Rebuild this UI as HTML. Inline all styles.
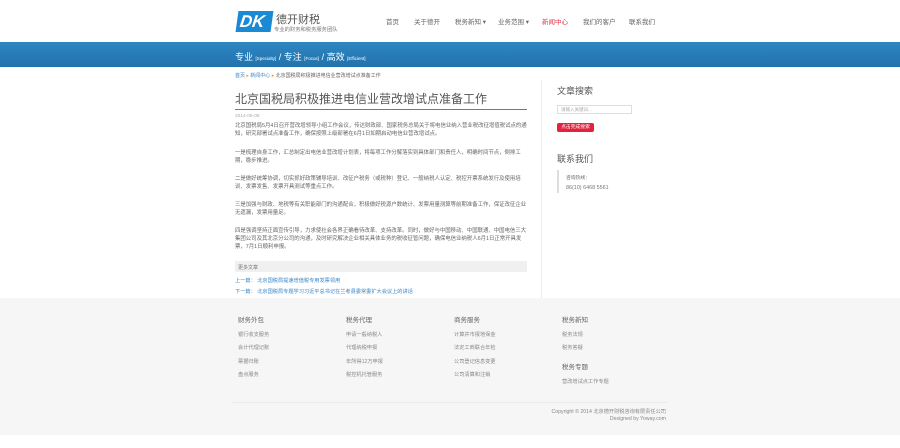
<!DOCTYPE html>
<html><head><meta charset="utf-8"><style>
*{margin:0;padding:0;box-sizing:border-box}
body{width:900px;height:448px;background:#fff;font-family:"Liberation Sans","Noto Sans CJK SC",sans-serif;position:relative;overflow:hidden;color:#555}
.a{position:absolute;white-space:nowrap}
.nav{top:16px;font-size:6.5px;color:#666}
.p{position:absolute;left:235px;width:292px;font-size:5.4px;line-height:8px;color:#666}
.fh{font-size:6.5px;color:#666}
.fi{font-size:5.2px;color:#888}
</style></head><body>
<div class="a" style="left:237px;top:11px;width:35px;height:21px;background:#1a8ad4;color:#fff;font:italic bold 17px 'Liberation Sans',sans-serif;line-height:21px;padding-left:3px;transform:skewX(-8deg)">DK</div>
<div class="a" style="left:276px;top:11px;font-size:11px;color:#555">德开财税</div>
<div class="a" style="left:274px;top:25px;font-size:5.3px;color:#777">专业的财务和税务服务团队</div>
<div class="a nav" style="left:386px">首页</div>
<div class="a nav" style="left:414px">关于德开</div>
<div class="a nav" style="left:455px">税务新知 ▾</div>
<div class="a nav" style="left:498px">业务范围 ▾</div>
<div class="a nav" style="left:542px;color:#e0364f">新闻中心</div>
<div class="a nav" style="left:583px">我们的客户</div>
<div class="a nav" style="left:629px">联系我们</div>
<div class="a" style="left:0;top:42px;width:900px;height:25px;background:linear-gradient(#2e86c1,#2273ad)"></div>
<div class="a" style="left:235px;top:50px;color:#fff;font-size:9px">专业 <span style="font-size:4.5px">[Specialty]</span> / 专注 <span style="font-size:4.5px">[Focus]</span> / 高效 <span style="font-size:4.5px">[Efficient]</span></div>
<div class="a" style="left:235px;top:72px;font-size:5px;color:#3b86c6">首页 <span style="color:#f39c12">▸</span> 新闻中心 <span style="color:#f39c12">▸</span> <span style="color:#666">北京国税局积极推进电信业营改增试点准备工作</span></div>
<div class="a" style="left:541px;top:80px;width:1px;height:218px;background:#eee"></div>
<div class="a" style="left:235px;top:90px;font-size:12px;color:#555">北京国税局积极推进电信业营改增试点准备工作</div>
<div class="a" style="left:235px;top:109px;width:292px;height:1px;background:#3b86c6"></div>
<div class="a" style="left:235px;top:114px;font-size:4.8px;color:#aaa">2014-05-08</div>
<div class="p" style="top:122px">北京国税局5月4日召开营改增领导小组工作会议，传达财政部、国家税务总局关于将电信业纳入营业税改征增值税试点的通知，研究部署试点准备工作，确保按照上级部署在6月1日如期启动电信业营改增试点。</div>
<div class="p" style="top:149px">一是梳理自身工作，汇总制定出电信业营改增计划表，将每项工作分解落实到具体部门和责任人，明确时间节点，倒排工期，稳步推进。</div>
<div class="p" style="top:175px">二是做好统筹协调，切实抓好政策辅导培训、改征户税务（或税种）登记、一般纳税人认定、税控开票系统发行及使用培训、发票发售、发票开具测试等重点工作。</div>
<div class="p" style="top:201px">三是加强与财政、地税等有关职能部门的沟通配合，积极做好税源户数统计、发票用量测算等前期准备工作，保证改征企业无遗漏，发票用量足。</div>
<div class="p" style="top:227px">四是强调坚持正面宣传引导，力求使社会各界正确看待改革、支持改革。同时，做好与中国移动、中国联通、中国电信三大集团公司及其北京分公司的沟通，及时研究解决企业相关具体业务的税收征管问题，确保电信业纳税人6月1日正常开具发票，7月1日顺利申报。</div>
<div class="a" style="left:235px;top:261px;width:292px;height:11px;background:#f0f0f0;font-size:5px;color:#777;padding:3px 0 0 3px">更多文章</div>
<div class="a" style="left:235px;top:277px;font-size:5.2px;color:#3b86c6">上一篇： 北京国税局提速增值税专用发票领用</div>
<div class="a" style="left:235px;top:288px;font-size:5.2px;color:#3b86c6">下一篇： 北京国税局专题学习习近平总书记在兰考县委常委扩大会议上的讲话</div>
<div class="a" style="left:557px;top:84px;font-size:9px;color:#555">文章搜索</div>
<div class="a" style="left:557px;top:105px;width:75px;height:9px;border:1px solid #ddd;font-size:4.5px;color:#aaa;padding:1px 3px">请输入关键词...</div>
<div class="a" style="left:557px;top:123px;width:37px;height:9px;background:#e0243f;border-radius:2px;font-size:4.8px;color:#fff;text-align:center;line-height:9px">点击完成搜索</div>
<div class="a" style="left:557px;top:152px;font-size:9px;color:#555">联系我们</div>
<div class="a" style="left:557px;top:170px;width:2px;height:23px;background:#ddd"></div>
<div class="a" style="left:566px;top:174px;font-size:4.8px;color:#666">咨询热线：</div>
<div class="a" style="left:566px;top:185px;font-size:5.4px;color:#777">86(10) 6468 5561</div>
<div class="a" style="left:0;top:298px;width:900px;height:137px;background:#f6f6f6"></div>
<div class="a" style="left:232px;top:402px;width:436px;height:1px;background:#ececec"></div>
<div class="a fh" style="left:238px;top:314px">财务外包</div>
<div class="a fi" style="left:238px;top:331px">银行收支服务</div>
<div class="a fi" style="left:238px;top:344px">会计代理记账</div>
<div class="a fi" style="left:238px;top:358px">票据归账</div>
<div class="a fi" style="left:238px;top:371px">盘点服务</div>
<div class="a fh" style="left:346px;top:314px">税务代理</div>
<div class="a fi" style="left:346px;top:331px">申请一般纳税人</div>
<div class="a fi" style="left:346px;top:344px">代理纳税申报</div>
<div class="a fi" style="left:346px;top:358px">年所得12万申报</div>
<div class="a fi" style="left:346px;top:371px">税控机托管服务</div>
<div class="a fh" style="left:454px;top:314px">商务服务</div>
<div class="a fi" style="left:454px;top:331px">计算并市报地保金</div>
<div class="a fi" style="left:454px;top:344px">法定工商联合年检</div>
<div class="a fi" style="left:454px;top:358px">公司登记信息变更</div>
<div class="a fi" style="left:454px;top:371px">公司清算和注销</div>
<div class="a fh" style="left:562px;top:314px">税务新知</div>
<div class="a fi" style="left:562px;top:331px">税务法规</div>
<div class="a fi" style="left:562px;top:344px">税务答疑</div>
<div class="a fh" style="left:562px;top:361px">税务专题</div>
<div class="a fi" style="left:562px;top:378px">营改增试点工作专题</div>
<div class="a" style="left:520px;top:409px;width:146px;text-align:right;font-size:5.2px;color:#888;line-height:7px">Copyright © 2014 北京德开财税咨询有限责任公司<br>Designed by Yoway.com</div>
</body></html>
